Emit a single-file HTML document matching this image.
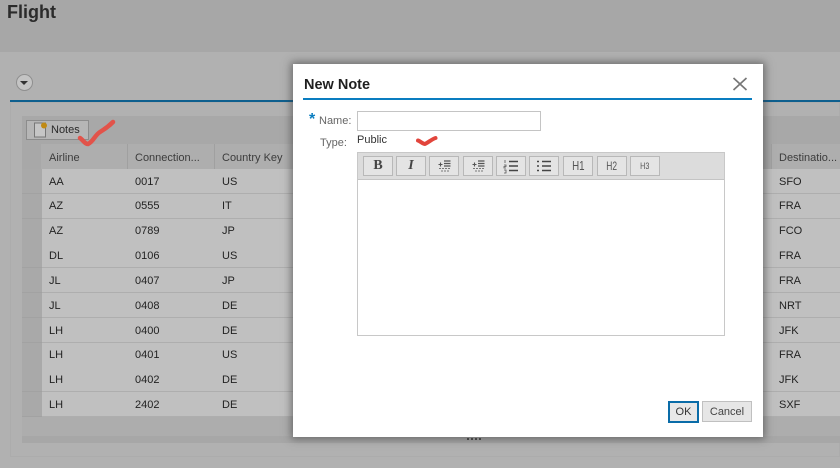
<!DOCTYPE html>
<html><head><meta charset="utf-8"><style>
html,body{margin:0;padding:0}
body{width:840px;height:468px;overflow:hidden;position:relative;background:#b1b1b1;font-family:"Liberation Sans",sans-serif;font-size:11px;color:#222}
#w{position:absolute;left:0;top:0;width:840px;height:468px;overflow:hidden;filter:blur(.3px)}
.a{position:absolute}
.t{position:absolute;white-space:nowrap;line-height:14px}
.r{position:absolute;left:42px;width:798px;height:24px;background:#c0c0c0;border-bottom:1px solid #aeaeae}
.s{position:absolute;left:22px;width:20px;height:24px;background:#a9a9a9;border-bottom:1px solid #a2a2a2}
.b{position:absolute;top:156px;height:18px;width:28px;background:#e4e4e4;border:1px solid #b8b8b8;text-align:center;line-height:18px;color:#555}
.b svg{position:absolute;left:0;top:0}
</style></head><body><div id="w">
<div class="a" style="left:0;top:0;width:840px;height:52px;background:#a7a7a7"></div>
<div class="t" style="left:7px;top:1px;font-size:18px;line-height:22px;font-weight:bold;color:#2b2b2b">Flight</div>
<div class="a" style="left:16px;top:74px;width:15px;height:15px;border-radius:50%;background:#c4c4c4;border:1px solid #8f8f8f"></div>
<div class="a" style="left:20px;top:81px;width:0;height:0;border-left:4px solid transparent;border-right:4px solid transparent;border-top:4px solid #333"></div>
<div class="a" style="left:10px;top:100px;width:830px;height:2px;background:#0e5f8e"></div>
<div class="a" style="left:10px;top:102px;width:830px;height:355px;box-sizing:border-box;border:1px solid #acacac;background:#b1b1b1"></div>
<div class="a" style="left:22px;top:116px;width:818px;height:28px;background:#a8a8a8"></div>
<div class="a" style="left:26px;top:120px;width:61px;height:18px;background:#b6b6b6;border:1px solid #8c8c8c"></div>
<svg class="a" style="left:32px;top:120px" width="16" height="20"><rect x="2.500" y="3" width="11" height="14" fill="#c6c6c6" stroke="#777"/><circle cx="12" cy="5.500" r="3" fill="#c08a14"/></svg>
<div class="t" style="left:51px;top:123px;color:#2a2a2a">Notes</div>
<div class="a" style="left:22px;top:144px;width:818px;height:25px;background:#a8a8a8"></div>
<div class="a" style="left:41px;top:144px;width:86px;height:25px;background:#aeaeae"></div>
<div class="a" style="left:127px;top:144px;width:87px;height:25px;background:#aeaeae;border-left:1px solid #a0a0a0"></div>
<div class="a" style="left:214px;top:144px;width:90px;height:25px;background:#aeaeae;border-left:1px solid #a0a0a0"></div>
<div class="a" style="left:771px;top:144px;width:69px;height:25px;background:#aeaeae;border-left:1px solid #a0a0a0"></div>
<div class="t" style="left:49px;top:151px;color:#3c3c3c">Airline</div>
<div class="t" style="left:135px;top:151px;color:#3c3c3c">Connection...</div>
<div class="t" style="left:222px;top:151px;color:#3c3c3c">Country Key</div>
<div class="t" style="left:779px;top:151px;color:#3c3c3c">Destinatio...</div>

<div class="s" style="top:169px"></div><div class="r" style="top:169px"></div>
<div class="s" style="top:194px"></div><div class="r" style="top:194px"></div>
<div class="s" style="top:219px"></div><div class="r" style="top:219px"></div>
<div class="s" style="top:243px"></div><div class="r" style="top:243px"></div>
<div class="s" style="top:268px"></div><div class="r" style="top:268px"></div>
<div class="s" style="top:293px"></div><div class="r" style="top:293px"></div>
<div class="s" style="top:318px"></div><div class="r" style="top:318px"></div>
<div class="s" style="top:343px"></div><div class="r" style="top:343px"></div>
<div class="s" style="top:367px"></div><div class="r" style="top:367px"></div>
<div class="s" style="top:392px"></div><div class="r" style="top:392px"></div>
<div class="a" style="left:22px;top:417px;width:818px;height:19px;background:#adadad"></div>
<div class="a" style="left:22px;top:436px;width:818px;height:7px;background:#a7a7a7"></div>

<div class="t" style="left:49px;top:175px">AA</div><div class="t" style="left:135px;top:175px">0017</div><div class="t" style="left:222px;top:175px">US</div><div class="t" style="left:779px;top:175px">SFO</div>
<div class="t" style="left:49px;top:199px">AZ</div><div class="t" style="left:135px;top:199px">0555</div><div class="t" style="left:222px;top:199px">IT</div><div class="t" style="left:779px;top:199px">FRA</div>
<div class="t" style="left:49px;top:224px">AZ</div><div class="t" style="left:135px;top:224px">0789</div><div class="t" style="left:222px;top:224px">JP</div><div class="t" style="left:779px;top:224px">FCO</div>
<div class="t" style="left:49px;top:249px">DL</div><div class="t" style="left:135px;top:249px">0106</div><div class="t" style="left:222px;top:249px">US</div><div class="t" style="left:779px;top:249px">FRA</div>
<div class="t" style="left:49px;top:274px">JL</div><div class="t" style="left:135px;top:274px">0407</div><div class="t" style="left:222px;top:274px">JP</div><div class="t" style="left:779px;top:274px">FRA</div>
<div class="t" style="left:49px;top:299px">JL</div><div class="t" style="left:135px;top:299px">0408</div><div class="t" style="left:222px;top:299px">DE</div><div class="t" style="left:779px;top:299px">NRT</div>
<div class="t" style="left:49px;top:324px">LH</div><div class="t" style="left:135px;top:324px">0400</div><div class="t" style="left:222px;top:324px">DE</div><div class="t" style="left:779px;top:324px">JFK</div>
<div class="t" style="left:49px;top:348px">LH</div><div class="t" style="left:135px;top:348px">0401</div><div class="t" style="left:222px;top:348px">US</div><div class="t" style="left:779px;top:348px">FRA</div>
<div class="t" style="left:49px;top:373px">LH</div><div class="t" style="left:135px;top:373px">0402</div><div class="t" style="left:222px;top:373px">DE</div><div class="t" style="left:779px;top:373px">JFK</div>
<div class="t" style="left:49px;top:398px">LH</div><div class="t" style="left:135px;top:398px">2402</div><div class="t" style="left:222px;top:398px">DE</div><div class="t" style="left:779px;top:398px">SXF</div>

<svg class="a" style="left:75px;top:115px" width="45" height="35"><path d="M5 23 C8 25 10 29 13 29 C18 27 20 20 25 17 C30 14 35 10 38 7" fill="none" stroke="#e2534a" stroke-width="4.500" stroke-linecap="round" stroke-linejoin="round"/></svg>

<!-- dialog -->
<div class="a" style="left:293px;top:64px;width:470px;height:373px;background:#fff;box-shadow:0 0 8px 2px rgba(60,60,60,.6)"></div>
<div class="t" style="left:304px;top:76px;font-size:14.500px;line-height:18px;font-weight:bold;color:#1f1f1f">New Note</div>
<div class="a" style="left:303px;top:98px;width:449px;height:2px;background:#0a7dc0"></div>
<svg class="a" style="left:732px;top:76px" width="16" height="16"><path d="M1.500 2 L14.500 14 M14.500 2 L1.500 14" stroke="#777" stroke-width="1.700" fill="none"/></svg>

<div class="t" style="left:309px;top:113px;font-size:16px;font-weight:bold;color:#0a7dc0">*</div>
<div class="t" style="left:319px;top:114px;color:#666">Name:</div>
<div class="a" style="left:357px;top:111px;width:182px;height:18px;background:#fff;border:1px solid #c4c4c4"></div>
<div class="t" style="left:320px;top:136px;color:#666">Type:</div>
<div class="t" style="left:357px;top:133px;color:#333">Public</div>
<svg class="a" style="left:412px;top:130px" width="30" height="20"><path d="M6 10.500 C8 11 11 14 13 14 C17 12 20 9 23.500 8" fill="none" stroke="#e2453c" stroke-width="4" stroke-linecap="round" stroke-linejoin="round"/></svg>

<div class="a" style="left:357px;top:152px;width:366px;height:182px;background:#fff;border:1px solid #c8c8c8"></div>
<div class="a" style="left:358px;top:153px;width:366px;height:26px;background:#dcdcdc;border-bottom:1px solid #c4c4c4"></div>

<div class="b" style="left:363px;font:bold 14px/18px 'Liberation Serif',serif;color:#444">B</div>
<div class="b" style="left:396px;font:italic bold 14px/18px 'Liberation Serif',serif;color:#444">I</div>
<div class="b" style="left:429px"><svg width="28" height="18"><path d="M14 4h6.500M14 6.500h6.500M14 9h6.500" stroke="#555" stroke-width="1.200" fill="none"/><path d="M9 11.500h11.500M11 14h8" stroke="#777" stroke-width="1" stroke-dasharray="2 1" fill="none"/><path d="M8.500 7.500h4M10.500 5.500v4" stroke="#555" stroke-width="1.100" fill="none"/></svg></div>
<div class="b" style="left:463px"><svg width="28" height="18"><path d="M14 4h6.500M14 6.500h6.500M14 9h6.500" stroke="#555" stroke-width="1.200" fill="none"/><path d="M9 11.500h11.500M11 14h8" stroke="#777" stroke-width="1" stroke-dasharray="2 1" fill="none"/><path d="M8.500 7.500h4M10.500 5.500v4" stroke="#555" stroke-width="1.100" fill="none"/></svg></div>
<div class="b" style="left:496px"><svg width="28" height="18"><path d="M12 4.500h9M12 9h9M12 13.500h9" stroke="#444" stroke-width="1.400" fill="none"/><path d="M8 3v3M7 8h2v1.500h-2v1.500h2M7 13h2v3h-2" stroke="#555" stroke-width=".8" fill="none"/></svg></div>
<div class="b" style="left:529px"><svg width="28" height="18"><path d="M12 4.500h9M12 9h9M12 13.500h9" stroke="#444" stroke-width="1.400" fill="none"/><path d="M7 4.500h2M7 9h2M7 13.500h2" stroke="#444" stroke-width="1.600" fill="none"/></svg></div>
<div class="b" style="left:563px;font-size:13px"><span style="display:inline-block;transform:scaleX(.75)">H1</span></div>
<div class="b" style="left:597px;font-size:12px"><span style="display:inline-block;transform:scaleX(.7)">H2</span></div>
<div class="b" style="left:630px;font-size:9px"><span style="display:inline-block;transform:scaleX(.8)">H3</span></div>

<div class="a" style="left:668px;top:401px;width:27px;height:18px;background:#e8e8e8;border:2px solid #0a6ca8;text-align:center;line-height:18px;color:#333">OK</div>
<div class="a" style="left:702px;top:401px;width:48px;height:19px;background:#e6e6e6;border:1px solid #c0c0c0;text-align:center;line-height:21px;color:#444">Cancel</div>

<div class="a" style="left:467px;top:438px;width:2px;height:2px;background:#444"></div>
<div class="a" style="left:471px;top:438px;width:2px;height:2px;background:#444"></div>
<div class="a" style="left:475px;top:438px;width:2px;height:2px;background:#444"></div>
<div class="a" style="left:479px;top:438px;width:2px;height:2px;background:#444"></div>
</div></body></html>
